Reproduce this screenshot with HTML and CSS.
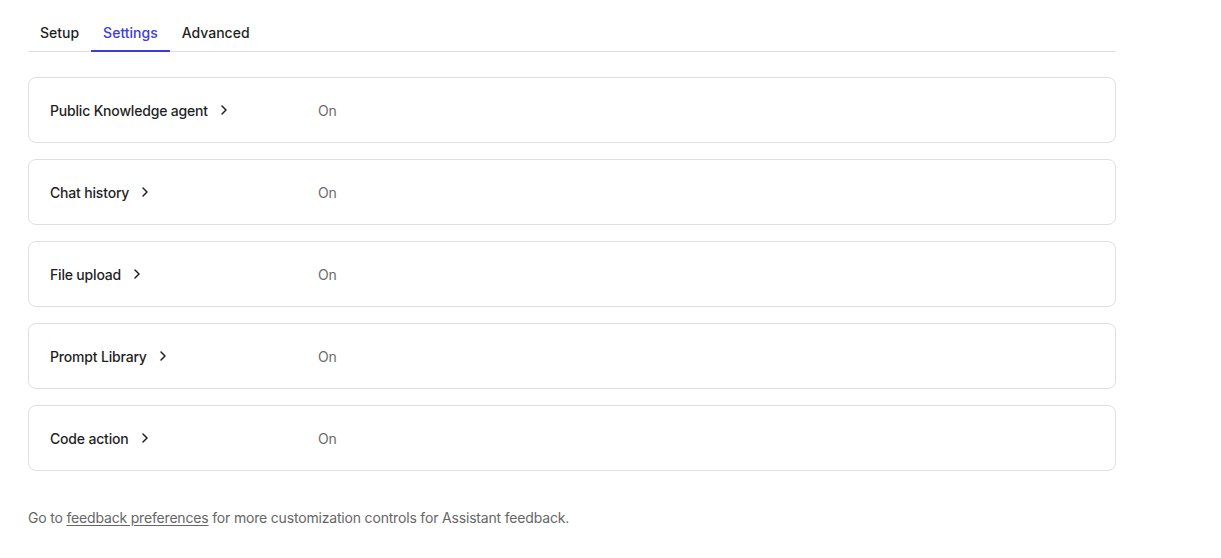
FILE: index.html
```html
<!DOCTYPE html>
<html>
  <head>
    <meta charset="utf-8" />
    <meta name="viewport" content="width=device-width, initial-scale=1" />
    <link rel="stylesheet" href="styles.css">
  </head>
  <body>
    <div class="page">
      <nav class="tabs">
        <a href="#" class="tab">Setup</a>
        <a href="#" class="tab active">Settings</a>
        <a href="#" class="tab">Advanced</a>
      </nav>

      <ul class="settings">
        <li class="card">
          <a href="#" class="label">Public Knowledge agent
            <svg class="chev" width="8" height="12" viewBox="0 0 8 12"><path d="M2 2l4 4-4 4" /></svg>
          </a>
          <span class="value">On</span>
        </li>
        <li class="card">
          <a href="#" class="label">Chat history
            <svg class="chev" width="8" height="12" viewBox="0 0 8 12"><path d="M2 2l4 4-4 4" /></svg>
          </a>
          <span class="value">On</span>
        </li>
        <li class="card">
          <a href="#" class="label">File upload
            <svg class="chev" width="8" height="12" viewBox="0 0 8 12"><path d="M2 2l4 4-4 4" /></svg>
          </a>
          <span class="value">On</span>
        </li>
        <li class="card">
          <a href="#" class="label">Prompt Library
            <svg class="chev" width="8" height="12" viewBox="0 0 8 12"><path d="M2 2l4 4-4 4" /></svg>
          </a>
          <span class="value">On</span>
        </li>
        <li class="card">
          <a href="#" class="label">Code action
            <svg class="chev" width="8" height="12" viewBox="0 0 8 12"><path d="M2 2l4 4-4 4" /></svg>
          </a>
          <span class="value">On</span>
        </li>
      </ul>

      <p class="note">Go to <a href="#">feedback preferences</a> for more customization controls for Assistant feedback.</p>
    </div>
  </body>
</html>
```

FILE: styles.css
```css
body,
html {
  margin: 0;
  background: #fff;
  color: #1f1f1f;
  font-family: Inter, "Liberation Sans", sans-serif;
  font-size: 14px;
  letter-spacing: -0.18px;
}
.page {
  width: 1088px;
  padding: 13px 0 0 28px;
}

.tabs {
  display: flex;
  border-bottom: 1px solid #dedede;
}
.tab {
  display: block;
  padding: 10px 12px 7px;
  line-height: 20px;
  margin-bottom: -1px;
  border-bottom: 2px solid transparent;
  color: #1f1f1f;
  text-decoration: none;
  font-weight: 500;
  letter-spacing: 0;
}
.tab.active {
  color: #3d3ddb;
  border-bottom-color: #3d3ddb;
}

.settings {
  list-style: none;
  margin: 25px 0 0;
  padding: 0;
  display: flex;
  flex-direction: column;
  gap: 16px;
}
.card {
  display: flex;
  align-items: center;
  height: 64px;
  padding: 0 21px;
  border: 1px solid #dfdfdf;
  border-radius: 8px;
}
.label {
  width: 268px;
  display: flex;
  align-items: center;
  gap: 12px;
  color: #1f1f1f;
  text-decoration: none;
  font-weight: 500;
}
.chev {
  fill: none;
  stroke: #1f1f1f;
  stroke-width: 1.5;
  stroke-linecap: round;
  stroke-linejoin: round;
}
.value {
  color: #6b6b6b;
}

.note {
  margin: 37px 0 0;
  color: #666;
  line-height: 20px;
}
.note a {
  color: #666;
  text-decoration: underline;
  text-underline-offset: 2px;
}
```
